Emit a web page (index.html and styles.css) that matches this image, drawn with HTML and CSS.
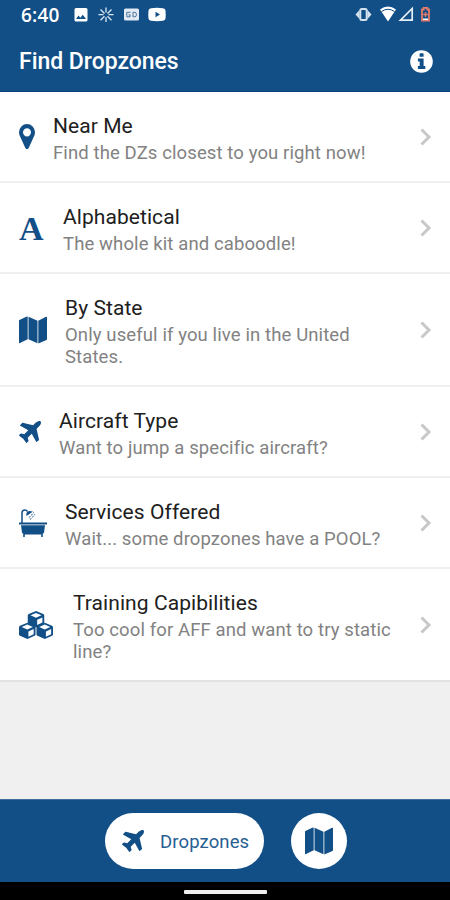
FILE: index.html
```html
<!DOCTYPE html>
<html lang="en">
<head>
<meta charset="utf-8">
<title>Find Dropzones</title>
<link rel="stylesheet" href="styles.css">
</head>
<body>
<svg class="defs" width="0" height="0">
  <symbol id="plane" viewBox="190 138 1404 1404"><path d="M1568 160q44 52 12 148t-108 172l-161 161 160 696q5 19-12 33l-128 96q-7 6-19 6-4 0-7-1-15-3-21-16l-279-508-259 259 53 194q5 17-8 31l-96 96q-9 9-23 9h-2q-15-2-24-13l-189-252-252-189q-11-7-13-23-1-13 9-25l96-97q9-9 23-9 6 0 8 1l194 53 259-259-508-279q-14-8-17-24-2-16 9-27l128-128q14-13 30-8l665 159 160-160q76-76 172-108t148 12z"/></symbol>
  <symbol id="map" viewBox="0 0 28 28"><path d="M.4 4 7.800.6Q8.700.3 8.700 1v22.2L1 27.100q-1 .5-1-.6V4.800Q0 4.200.4 4zM9.500.8l9 4v22.500l-9-4zM19.300 4.800 27 .8q1-.5 1 .6v21.700q0 .6-.5.8l-8.200 3.600z"/></symbol>
  <symbol id="chevron" viewBox="0 0 12 18"><path d="m1.500 1.500 7.500 7.500-7.500 7.500" fill="none" stroke="#c8c8c8" stroke-width="3"/></symbol>
</svg>
<div class="screen">
  <header class="header">
    <div class="status">
      <span class="clock">6:40</span>
      <svg class="light notifs" width="96" height="20" viewBox="72 5 96 20">
        <path fill-rule="evenodd" d="M76 8h10q1.500 0 1.500 1.500v10.500q0 1.500-1.500 1.500H76q-1.500 0-1.500-1.500V9.500Q74.500 8 76 8zm0 11h10l-3.200-4.300-2.500 3-1.800-2.100z"/>
        <g stroke="#dce8f3" stroke-width="1.300"><path d="M106 7.500v5M106 17v5M98.500 14.700h5M108.500 14.700h5M100.500 9.500l4 4M111.500 9.500l-4 4M100.500 20.300l4-4M111.500 20.300l-4-4"/></g>
        <rect x="124" y="8.500" width="15" height="12" rx="1.500" fill="#e2eaf3"/>
        <path d="M130.500 12.300h-3.700v4.500h3.300v-2h-1.500M133 12.300h1.500q2 0 2 2.250t-2 2.250H133z" fill="none" stroke="#4c7298"/>
        <path fill-rule="evenodd" d="M151 8.200q6-.7 12 0 2.300.2 2.500 2.300.4 4 0 8-.2 2.100-2.500 2.300-6 .7-12 0-2.300-.2-2.500-2.300-.4-4 0-8 .2-2.100 2.500-2.300zm4.500 3.600v5.400l4.500-2.700z"/>
      </svg>
      <svg class="light signals" width="80" height="20" viewBox="353 5 80 20">
        <path d="m355.500 14.500 4-4.500v9zM371.500 14.500l-4-4.500v9z" fill="#d5e3ef"/>
        <rect x="360.300" y="9" width="6.400" height="11" rx="1.500" fill="none" stroke="#d5e3ef" stroke-width="2"/>
        <path d="M380 9.500q8-6 16 0l-8 12z"/><path d="M381.500 11.500q6.500-4.500 13 0" fill="none" stroke="#124f87" stroke-width="1"/>
        <path d="M400.500 20.200h11.700V8.500z" fill="none" stroke="#e6eff7" stroke-width="1.700"/>
        <path d="M422 9.500h1.700V7.800h3.600v1.700h1.700v11.200h-7z" fill="none" stroke="#e67c6b" stroke-width="1.800"/><path d="M423.200 14.500h4.600M425.500 12.200v4.600" stroke="#e67c6b" stroke-width="1.500"/><path d="M423 18.500h5v1.500h-5z"/>
      </svg>
    </div>
    <div class="titlebar">
      <h1>Find Dropzones</h1>
      <svg width="23" height="23" viewBox="0 0 23 23"><circle cx="11.500" cy="11.500" r="11.300" fill="#fff"/><g><rect x="9.600" y="3.300" width="4" height="3.500" rx=".6"/><path d="M7.900 8.500h5.700v7.600h1.700V19H7.900v-2.900h1.800v-4.700H7.900z"/></g></svg>
    </div>
  </header>
  <main class="list">
    <a class="row">
      <svg class="icon pin" width="16" height="25" viewBox="384 128 1024 1536" preserveAspectRatio="none"><path d="M1152 640q0-106-75-181t-181-75-181 75-75 181 75 181 181 75 181-75 75-181zm256 0q0 109-33 179l-364 774q-16 33-47.500 52t-67.500 19-67.500-19-46.500-52l-365-774q-33-70-33-179 0-212 150-362t362-150 362 150 150 362z"/></svg>
      <div class="text"><h2>Near Me</h2><p>Find the DZs closest to you right now!</p></div>
      <svg class="chev" width="12" height="18"><use href="#chevron"/></svg>
    </a>
    <a class="row">
      <span class="icon letter">A</span>
      <div class="text"><h2>Alphabetical</h2><p>The whole kit and caboodle!</p></div>
      <svg class="chev" width="12" height="18"><use href="#chevron"/></svg>
    </a>
    <a class="row tall">
      <svg class="icon" width="28" height="28"><use href="#map"/></svg>
      <div class="text"><h2>By State</h2><p>Only useful if you live in the United<br>States.</p></div>
      <svg class="chev" width="12" height="18"><use href="#chevron"/></svg>
    </a>
    <a class="row">
      <svg class="icon" width="22" height="22"><use href="#plane"/></svg>
      <div class="text"><h2>Aircraft Type</h2><p>Want to jump a specific aircraft?</p></div>
      <svg class="chev" width="12" height="18"><use href="#chevron"/></svg>
    </a>
    <a class="row">
      <svg class="icon" width="28" height="28" viewBox="0 0 28 28"><path d="M0 13.500h28v2H0zM2 16.300h24l-1 7.500-1.200 1V28h-1.600v-2.500H5.800V28H4.200v-3.200L3 23.800z"/><path d="M3 14V4Q3 1 6 1q1.500 0 2.500 1.500" fill="none" stroke="#124f87" stroke-width="1.500"/><path d="M7.500 7q-1-4 2.500-5l4 .500z"/><path d="m10 8.500 5-5M11 10.500l5-5" stroke="#6e91b4" stroke-width="1.100" stroke-dasharray="2 1"/></svg>
      <div class="text"><h2>Services Offered</h2><p>Wait... some dropzones have a POOL?</p></div>
      <svg class="chev" width="12" height="18"><use href="#chevron"/></svg>
    </a>
    <a class="row tall last">
      <svg class="icon cubes" width="34" height="28" viewBox="0 0 35 28" preserveAspectRatio="none"><defs><g id="cube"><path d="M8.600 0 16 3q1 .5 1 1.500v7q0 1-1 1.500l-7.400 3.300L1 13q-1-.5-1-1.500v-7Q0 3.500 1 3z"/><path fill="#fff" d="m8.500 1.900 5.700 2.400-5.700 2.500-5.700-2.500zM9.700 8.800l5.400-2.400v5.100l-5.400 2.500z"/></g></defs><use href="#cube" x="9"/><use href="#cube" y="11.700"/><use href="#cube" x="18" y="11.700"/></svg>
      <div class="text"><h2>Training Capibilities</h2><p>Too cool for AFF and want to try static<br>line?</p></div>
      <svg class="chev" width="12" height="18"><use href="#chevron"/></svg>
    </a>
  </main>
  <nav class="tabs">
    <a class="pill"><svg width="22" height="22"><use href="#plane"/></svg><span>Dropzones</span></a>
    <a class="round"><svg width="28" height="28"><use href="#map"/></svg></a>
  </nav>
  <div class="home"><i></i></div>
</div>
</body>
</html>
```
FILE: styles.css
```css
* { box-sizing: border-box; }
body { margin: 0; font-family: Roboto, sans-serif; background: #f0f0f0; }
h1, h2, p { margin: 0; font-weight: 400; white-space: nowrap; }
svg { display: block; flex: none; fill: #124f87; }
.light { fill: #fff; }
.defs { position: absolute; }
.screen { width: 450px; height: 900px; display: flex; flex-direction: column; overflow: hidden; }
.header { height: 92px; background: #124f87; border-bottom: 1px solid #0b427b; color: #fff; flex: none; }
.status { height: 30px; display: flex; align-items: center; padding: 0 17px 0 21px; }
.clock { width: 51px; font: 600 19px/30px "Open Sans", sans-serif; letter-spacing: .2px; }
.signals { margin-left: auto; }
.titlebar { height: 62px; display: flex; align-items: center; justify-content: space-between; padding: 0 17px 0 19px; }
h1 { font-size: 23px; font-weight: 500; line-height: 28px; letter-spacing: -.03px; padding-top: 2px; }
.list { flex: 1; background: #f0f0f0; }
.row { height: 91px; display: flex; align-items: center; background: #fff; border-bottom: 2px solid #efefef; padding: 0 18px 0 19px; }
.tall { height: 113px; }
.last { border-color: #e3e3e3; }
.icon { margin-right: 18px; }
.letter { width: 25px; margin-right: 19px; padding-top: 2px; color: #124f87; font: bold 34px/35px "Liberation Serif", serif; }
.cubes { margin-right: 20px; }
.text { flex: 1; padding-top: 3px; }
h2 { font-size: 21px; line-height: 26px; letter-spacing: .07px; color: #202020; }
p { font-size: 18.500px; line-height: 22px; letter-spacing: .11px; margin-top: 3px; color: #828282; }
.tabs { height: 83px; flex: none; background: #124f87; border-top: 1px solid #416f9e; display: flex; justify-content: center; align-items: center; gap: 27px; padding-left: 2px; }
.pill { width: 159px; height: 56px; border-radius: 28px; background: #fff; display: flex; align-items: center; padding-left: 17px; }
.pill span { margin-left: 16px; padding-top: 2px; font-size: 18.500px; line-height: 24px; letter-spacing: .12px; color: #285e91; }
.round { width: 56px; height: 56px; border-radius: 50%; background: #fff; display: flex; align-items: center; justify-content: center; }
.home { height: 18px; flex: none; background: #000; display: flex; justify-content: center; align-items: center; padding-top: 2px; }
.home i { width: 83px; height: 4px; border-radius: 1px; background: #eee; }
```
